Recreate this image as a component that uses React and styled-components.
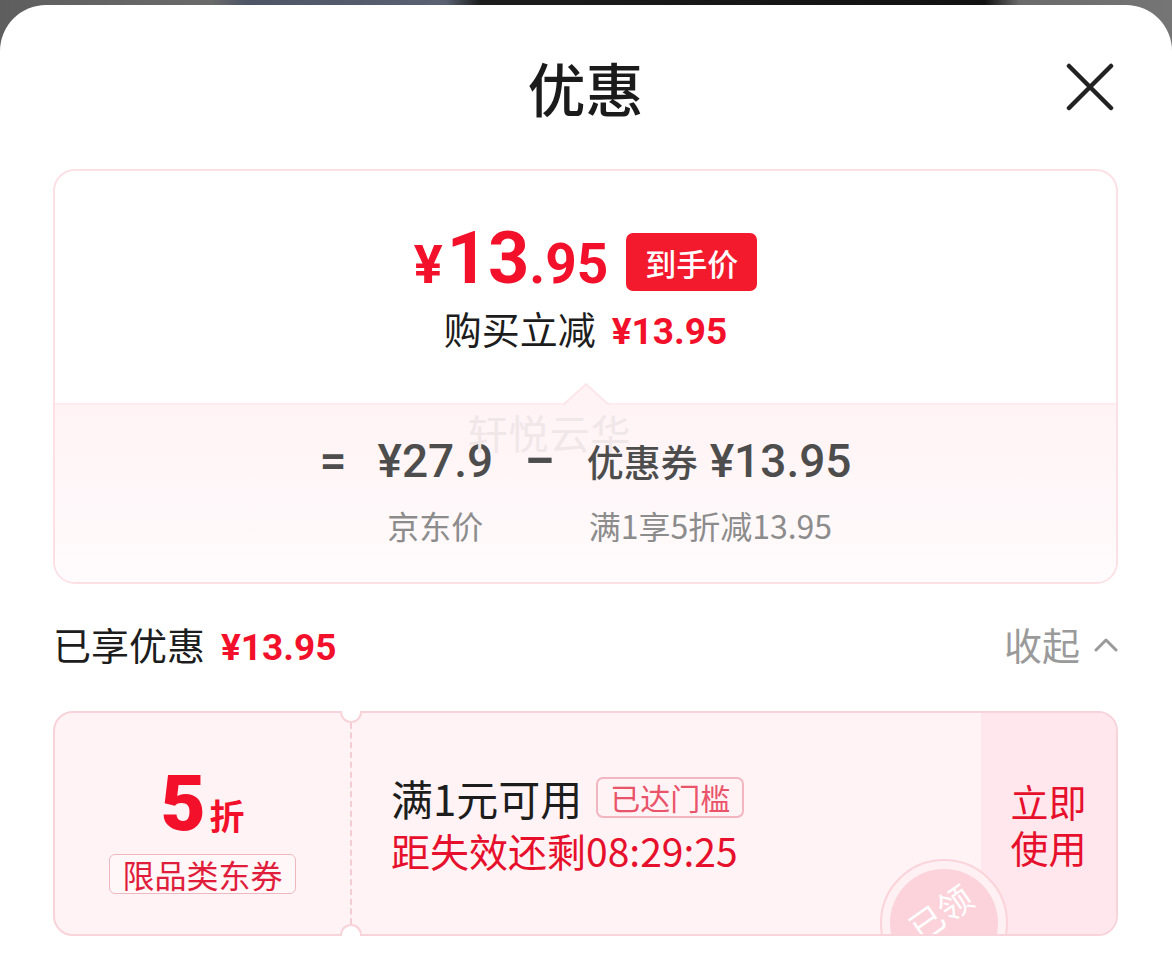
import React from "react";
import styled, { createGlobalStyle } from "styled-components";

const GlobalStyle = createGlobalStyle`
  html, body {
    margin: 0;
    padding: 0;
  }
  body {
    font-family: "Noto Sans CJK SC", "Noto Sans", sans-serif;
    background: #fff;
  }
  * {
    box-sizing: border-box;
  }
`;

const RED = "#f2102a";
const NUM = `"Roboto", "Noto Sans CJK SC", sans-serif`;

const Backdrop = styled.div`
  min-height: 100vh;
  padding-top: 5px;
  display: flex;
  flex-direction: column;
  background: linear-gradient(
    90deg,
    #5e5e5e 0%,
    #6a6a6a 18%,
    #4e5666 21%,
    #5a6272 38%,
    #1c1c1c 41%,
    #121212 84%,
    #6b6b6b 87%,
    #757575 100%
  );
`;

const Sheet = styled.div`
  flex: 1;
  background: #fff;
  border-radius: 46px 46px 0 0;
  padding: 0 54px 0 53px;
`;

const Header = styled.div`
  height: 164px;
  display: grid;
  grid-template-columns: 1fr auto 1fr;
  align-items: center;
`;

const Title = styled.h1`
  grid-column: 2;
  margin: 0;
  font-size: 58px;
  font-weight: 500;
  color: #1b1b1b;
  line-height: 1;
`;

const CloseButton = styled.button`
  grid-column: 3;
  justify-self: end;
  margin-right: 4px;
  padding: 0;
  border: none;
  background: none;
  width: 48px;
  height: 48px;
  display: flex;
`;

const PriceCard = styled.section`
  border: 2px solid #fce0e6;
  border-radius: 22px;
  overflow: hidden;
`;

const PriceTop = styled.div`
  height: 232px;
  padding-top: 52px;
  display: flex;
  flex-direction: column;
  align-items: center;
`;

const PriceRow = styled.div`
  display: flex;
  align-items: center;
  gap: 18px;
`;

const BigPrice = styled.div`
  font-family: ${NUM};
  font-weight: 700;
  color: ${RED};
  line-height: 72px;
  display: flex;
  align-items: baseline;
`;

const PricePart = styled.span`
  font-size: ${(p) => p.size}px;
  margin-right: ${(p) => p.gap || 0}px;
`;

const HandBadge = styled.span`
  height: 58px;
  padding: 0 19px;
  border-radius: 7px;
  background: #f31a2e;
  color: #fff;
  font-size: 31px;
  font-weight: 500;
  display: flex;
  align-items: center;
`;

const Subline = styled.div`
  margin-top: 3px;
  line-height: 48px;
  display: flex;
  align-items: baseline;
  gap: 16px;
`;

const PlainText = styled.span`
  font-size: ${(p) => p.size || 38}px;
  color: ${(p) => p.color || "#1d1d1d"};
  font-weight: ${(p) => p.weight || 400};
`;

const RedNum = styled.span`
  font-family: ${NUM};
  font-weight: 700;
  font-size: ${(p) => p.size || 37}px;
  color: ${RED};
`;

const PriceBottom = styled.div`
  position: relative;
  height: 179px;
  border-top: 2px solid #fdebef;
  background: linear-gradient(180deg, #fff3f5 0%, #fffbfc 100%);
  padding-top: 28px;
  display: flex;
  justify-content: center;
`;

const Pointer = styled.svg`
  position: absolute;
  top: -23px;
  left: 50%;
  transform: translateX(-50%);
`;

const Watermark = styled.span`
  position: absolute;
  top: -2px;
  left: 50%;
  transform: translateX(-118px);
  font-size: 40px;
  color: #f0e7e9;
  letter-spacing: 1px;
  pointer-events: none;
`;

const Formula = styled.div`
  display: flex;
  align-items: flex-start;
  gap: 31px;
`;

const Operator = styled.span`
  font-family: ${NUM};
  font-size: ${(p) => p.size || 48}px;
  font-weight: 500;
  line-height: 56px;
  color: #4d4d4d;
`;

const Term = styled.div`
  display: flex;
  flex-direction: column;
  align-items: ${(p) => (p.left ? "flex-start" : "center")};
`;

const TermValue = styled.div`
  height: 56px;
  display: flex;
  align-items: baseline;
  gap: 12px;
  line-height: 56px;
  color: #4d4d4d;
`;

const TermNum = styled.span`
  font-family: ${NUM};
  font-weight: 500;
  font-size: 46px;
`;

const TermWord = styled.span`
  font-size: 37px;
  font-weight: 500;
`;

const TermLabel = styled.div`
  margin-top: 16px;
  font-size: 32px;
  line-height: 40px;
  color: #8c8c8c;
  margin-left: ${(p) => p.shift || 0}px;
`;

const SummaryRow = styled.div`
  height: 127px;
  padding-bottom: 8px;
  display: flex;
  align-items: center;
  justify-content: space-between;
`;

const Group = styled.div`
  display: flex;
  align-items: ${(p) => p.align || "baseline"};
  gap: ${(p) => p.gap}px;
`;

const CouponWrap = styled.div`
  position: relative;
  height: 225px;
`;

const Coupon = styled.div`
  height: 100%;
  border: 2px solid #f8d3da;
  border-radius: 20px;
  background: #fff3f5;
  overflow: hidden;
  position: relative;
  display: grid;
  grid-template-columns: 297px 1fr 135px;
`;

const Notch = styled.span`
  position: absolute;
  left: 287px;
  width: 22px;
  height: 12px;
  background: #fff;
  border: 2px solid #f8d3da;
  z-index: 2;
  ${(p) =>
    p.bottom
      ? `bottom: 0; border-bottom: none; border-radius: 12px 12px 0 0;`
      : `top: 0; border-top: none; border-radius: 0 0 12px 12px;`}
`;

const CouponLeft = styled.div`
  border-right: 2px dashed #f3ccd4;
  padding-top: 13px;
  display: flex;
  flex-direction: column;
  align-items: center;
  justify-content: center;
`;

const Discount = styled.div`
  display: flex;
  align-items: baseline;
  color: ${RED};
  line-height: 76px;
  height: 76px;
`;

const DiscountNum = styled.span`
  font-family: ${NUM};
  font-size: 78px;
  font-weight: 900;
  margin-right: 4px;
`;

const DiscountUnit = styled.span`
  font-size: 35px;
  font-weight: 700;
`;

const ScopeTag = styled.span`
  margin-top: 12px;
  height: 40px;
  padding: 0 12px;
  border: 1px solid #efb8c1;
  border-radius: 6px;
  background: #fff7f8;
  color: #e01e3c;
  font-size: 32px;
  line-height: 38px;
`;

const CouponMid = styled.div`
  padding-left: 39px;
  display: flex;
  flex-direction: column;
  justify-content: center;
  gap: 5px;
`;

const MidLine = styled.div`
  height: 48px;
  display: flex;
  align-items: center;
  gap: 14px;
  font-size: ${(p) => p.size}px;
  color: ${(p) => p.color};
  white-space: nowrap;
`;

const ReachedTag = styled.span`
  height: 41px;
  padding: 0 12px;
  border: 2px solid #f3b6c0;
  border-radius: 7px;
  color: #e9546a;
  font-size: 30px;
  display: flex;
  align-items: center;
`;

const CouponAction = styled.div`
  background: #ffe7ed;
  display: flex;
  flex-direction: column;
  align-items: center;
  justify-content: center;
  color: #e6102c;
  font-size: 38px;
  line-height: 46px;
`;

const Stamp = styled.div`
  position: absolute;
  left: 825px;
  top: 146px;
  width: 128px;
  height: 128px;
  border-radius: 50%;
  background: #fff0f3;
  border: 2px solid #fbd3da;
  display: flex;
  align-items: center;
  justify-content: center;
  pointer-events: none;
`;

const StampInner = styled.div`
  width: 108px;
  height: 108px;
  border-radius: 50%;
  background: #fdd3db;
  display: flex;
  align-items: center;
  justify-content: center;
`;

const StampText = styled.span`
  color: #fff;
  font-size: 34px;
  transform: translate(-4px, -12px) rotate(-35deg);
`;

export default function App() {
  return (
    <>
      <GlobalStyle />
      <Backdrop>
        <Sheet>
          <Header>
            <Title>优惠</Title>
            <CloseButton aria-label="关闭">
              <svg width="48" height="48" viewBox="0 0 48 48">
                <path
                  d="M3 3 L45 45 M45 3 L3 45"
                  stroke="#222"
                  strokeWidth="4.5"
                  strokeLinecap="round"
                />
              </svg>
            </CloseButton>
          </Header>

          <PriceCard>
            <PriceTop>
              <PriceRow>
                <BigPrice>
                  <PricePart size={54} gap={4}>¥</PricePart>
                  <PricePart size={72}>13</PricePart>
                  <PricePart size={55}>.95</PricePart>
                </BigPrice>
                <HandBadge>到手价</HandBadge>
              </PriceRow>
              <Subline>
                <PlainText>购买立减</PlainText>
                <RedNum>¥13.95</RedNum>
              </Subline>
            </PriceTop>
            <PriceBottom>
              <Pointer width="46" height="24" viewBox="0 0 46 24">
                <polygon points="0,24 23,2 46,24" fill="#fff3f5" />
                <polyline
                  points="0,23 23,2 46,23"
                  fill="none"
                  stroke="#fde6eb"
                  strokeWidth="2"
                />
              </Pointer>
              <Watermark>轩悦云华</Watermark>
              <Formula>
                <Operator>=</Operator>
                <Term>
                  <TermValue>
                    <TermNum>¥27.9</TermNum>
                  </TermValue>
                  <TermLabel>京东价</TermLabel>
                </Term>
                <Operator size={56}>−</Operator>
                <Term left>
                  <TermValue>
                    <TermWord>优惠券</TermWord>
                    <TermNum>¥13.95</TermNum>
                  </TermValue>
                  <TermLabel shift={2}>满1享5折减13.95</TermLabel>
                </Term>
              </Formula>
            </PriceBottom>
          </PriceCard>

          <SummaryRow>
            <Group gap={16}>
              <PlainText>已享优惠</PlainText>
              <RedNum>¥13.95</RedNum>
            </Group>
            <Group gap={14} align="center">
              <PlainText color="#9a9a9a">收起</PlainText>
              <svg width="24" height="16" viewBox="0 0 24 16">
                <polyline
                  points="2,14 12,4 22,14"
                  fill="none"
                  stroke="#9a9a9a"
                  strokeWidth="3"
                  strokeLinecap="round"
                  strokeLinejoin="round"
                />
              </svg>
            </Group>
          </SummaryRow>

          <CouponWrap>
            <Notch />
            <Notch bottom />
            <Coupon>
              <CouponLeft>
                <Discount>
                  <DiscountNum>5</DiscountNum>
                  <DiscountUnit>折</DiscountUnit>
                </Discount>
                <ScopeTag>限品类东券</ScopeTag>
              </CouponLeft>
              <CouponMid>
                <MidLine size={42} color="#1d1d1d">
                  满1元可用
                  <ReachedTag>已达门槛</ReachedTag>
                </MidLine>
                <MidLine size={39} color="#e6102c">
                  距失效还剩08:29:25
                </MidLine>
              </CouponMid>
              <CouponAction>
                <span>立即</span>
                <span>使用</span>
              </CouponAction>
              <Stamp>
                <StampInner>
                  <StampText>已领</StampText>
                </StampInner>
              </Stamp>
            </Coupon>
          </CouponWrap>
        </Sheet>
      </Backdrop>
    </>
  );
}
